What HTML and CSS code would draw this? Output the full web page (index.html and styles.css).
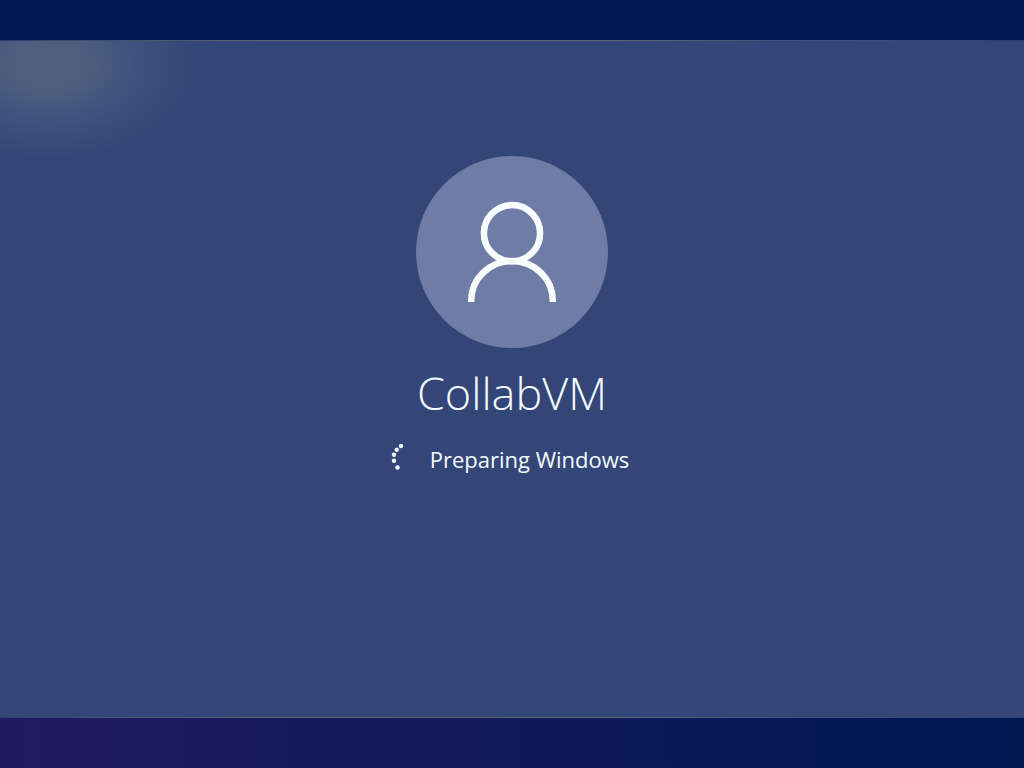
FILE: index.html
```html
<!DOCTYPE html>
<html lang="en">
<head>
<meta charset="utf-8">
<meta name="viewport" content="width=device-width, initial-scale=1">
<title>Preparing Windows</title>
<link rel="stylesheet" href="styles.css">
</head>
<body>
<div class="screen">
  <main class="panel">
    <svg class="avatar" viewBox="0 0 192 192" aria-hidden="true">
      <circle class="avatar-disc" cx="96" cy="96" r="96"/>
      <g class="avatar-lines">
        <circle cx="96" cy="77.2" r="28.1"/>
        <path d="M55.2 146v-1.500a40.800 39.500 0 0 1 81.600 0v1.500"/>
      </g>
    </svg>
    <h1 class="user-name">CollabVM</h1>
    <div class="status" role="status">
      <svg class="spinner" viewBox="0 0 32 32" aria-hidden="true">
        <circle cx="13" cy="6" r="2.200"/>
        <circle cx="8.700" cy="9.700" r="2.200"/>
        <circle cx="6" cy="14.700" r="2.200"/>
        <circle cx="6" cy="20.700" r="2.200"/>
        <circle cx="9.500" cy="27.500" r="2.200"/>
      </svg>
      <span class="status-text">Preparing Windows</span>
    </div>
  </main>
</div>
</body>
</html>
```
FILE: styles.css
```css
* {
  box-sizing: border-box;
}

body {
  margin: 0;
  color: #f4fbff;
  font-family: "Open Sans", "Noto Sans", sans-serif;
}

.screen {
  display: flex;
  flex-direction: column;
  min-height: 100vh;
  padding: 40px 0 50px;
  background:
    linear-gradient(90deg, #221a60 0%, #1c1b5e 14%, #151a5c 33%, #0b1958 67%, #021754 85%, #001852 100%) bottom / 100% 50px no-repeat,
    #001853;
}

.panel {
  flex: 1;
  display: flex;
  flex-direction: column;
  align-items: center;
  padding-top: 115px;
  border-top: 1px solid;
  border-bottom: 1px solid;
  border-image: linear-gradient(90deg, #2f4070 0%, #5c6672 25%, #5c6672 60%, #3c5082 80%, #2b3f72 100%) 1;
  background:
    radial-gradient(ellipse 150px 95px at 48px 24px, #52627f 0%, #4c5d7f 30%, #3e507c 65%, #334677 100%) no-repeat #334677;
}

.avatar {
  width: 192px;
  height: 192px;
}

.avatar-disc {
  fill: #6f7da6;
}

.avatar-lines {
  fill: none;
  stroke: #f9fdff;
  stroke-width: 6.5;
}

.user-name {
  margin: 14px 0 0;
  font-size: 45px;
  font-weight: 300;
  line-height: 62px;
}

.status {
  display: flex;
  align-items: flex-start;
  gap: 10px;
  margin-top: 16px;
  padding-right: 7px;
}

.spinner {
  width: 32px;
  height: 32px;
  fill: #f4fbff;
}

.status-text {
  font-size: 22px;
  line-height: 38px;
}
```
